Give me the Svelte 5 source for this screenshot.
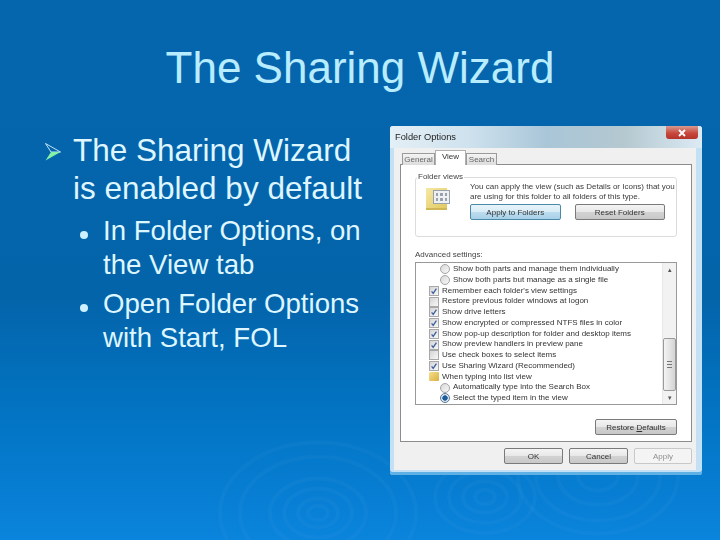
<script>
  // Filas de la lista "Advanced settings"
  const rows = [
    { kind: 'radio', label: 'Show both parts and manage them individually' },
    { kind: 'radio', label: 'Show both parts but manage as a single file' },
    { kind: 'check', on: true, label: "Remember each folder's view settings" },
    { kind: 'check', label: 'Restore previous folder windows at logon' },
    { kind: 'check', on: true, label: 'Show drive letters' },
    { kind: 'check', on: true, label: 'Show encrypted or compressed NTFS files in color' },
    { kind: 'check', on: true, label: 'Show pop-up description for folder and desktop items' },
    { kind: 'check', on: true, label: 'Show preview handlers in preview pane' },
    { kind: 'check', label: 'Use check boxes to select items' },
    { kind: 'check', on: true, label: 'Use Sharing Wizard (Recommended)' },
    { kind: 'folder', label: 'When typing into list view' },
    { kind: 'radio', label: 'Automatically type into the Search Box' },
    { kind: 'radio', on: true, label: 'Select the typed item in the view' }
  ];

  const rings = [
    { cx: 318, cy: 513, radii: [10, 20, 34, 48, 78, 98] },
    { cx: 485, cy: 497, radii: [10, 22, 36, 50] },
    { cx: 598, cy: 476, radii: [20, 40, 62, 80] }
  ];
</script>

<div class="slide">
  <svg class="ripples" viewBox="0 0 720 540" aria-hidden="true">
    {#each rings as g}
      {#each g.radii as r}
        <ellipse cx={g.cx} cy={g.cy} rx={r} ry={r * 0.72} fill="none" stroke="#fff" stroke-opacity="0.028" stroke-width="4"/>
      {/each}
    {/each}
  </svg>

  <h1>The Sharing Wizard</h1>

  <div class="content">
    <div class="text">
      <div class="main">
        <svg class="arrow" viewBox="0 0 16 18" aria-hidden="true">
          <polygon points="0.5,0.5 15.5,9 6,9" fill="none" stroke="#d4f4ff" stroke-width="0.9"/>
          <polygon points="6,9 15.5,9 0.5,17.5" fill="#86f2a8"/>
        </svg>
        <p>The Sharing Wizard<br>is enabled by default</p>
      </div>
      <ul>
        <li>In Folder Options, on<br>the View tab</li>
        <li>Open Folder Options<br>with Start, FOL</li>
      </ul>
    </div>

    <div class="dialog">
      <div class="titlebar">
        <span>Folder Options</span>
        <div class="close">
          <svg viewBox="0 0 10 8" aria-hidden="true"><path d="M2 1l6 6M8 1L2 7" stroke="#fff" stroke-width="1.8" fill="none"/></svg>
        </div>
      </div>
      <div class="client">
        <div class="tabs">
          <span class="tab">General</span>
          <span class="tab active">View</span>
          <span class="tab">Search</span>
        </div>
        <div class="panel">
          <fieldset class="views">
            <legend>Folder views</legend>
            <div class="views-icon">
              <div class="folder-sheet"></div>
              <div class="folder-win">
                {#each Array(6) as _}<i></i>{/each}
              </div>
            </div>
            <div class="views-body">
              <p>You can apply the view (such as Details or Icons) that you<br>are using for this folder to all folders of this type.</p>
              <div class="views-btns">
                <button class="btn focus">Apply to Folders</button>
                <button class="btn">Reset Folders</button>
              </div>
            </div>
          </fieldset>

          <div class="adv-label">Advanced settings:</div>
          <div class="listbox">
            <div class="items">
              {#each rows as row}
                <div class="row {row.kind}">
                  {#if row.kind === 'radio'}
                    <span class="radio-mark" class:on={row.on}></span>
                  {:else if row.kind === 'check'}
                    <span class="check-mark">
                      {#if row.on}
                        <svg viewBox="0 0 10 10" aria-hidden="true"><path d="M2 5.5l2 2.5 4-6" stroke="#3d5f9c" stroke-width="1.6" fill="none"/></svg>
                      {/if}
                    </span>
                  {:else}
                    <span class="folder-mark"></span>
                  {/if}
                  <span>{row.label}</span>
                </div>
              {/each}
            </div>
            <div class="scrollbar">
              <span class="sb-arrow">▴</span>
              <div class="sb-track"><div class="sb-thumb"><b></b></div></div>
              <span class="sb-arrow">▾</span>
            </div>
          </div>
          <div class="restore"><button class="btn wide">Restore <u>D</u>efaults</button></div>
        </div>
        <div class="footer">
          <button class="btn">OK</button>
          <button class="btn">Cancel</button>
          <button class="btn off">Apply</button>
        </div>
      </div>
    </div>
  </div>
</div>

<style>
  :global(body) { margin: 0; }

  .slide {
    position: relative;
    width: 720px;
    height: 540px;
    overflow: hidden;
    background: linear-gradient(180deg, #0566ae 0%, #0464aa 55%, #0272c0 74%, #0a84dc 100%);
    font-family: "Liberation Sans", Arial, sans-serif;
  }
  .ripples { position: absolute; inset: 0; width: 720px; height: 540px; }

  h1 {
    position: relative;
    margin: 0;
    height: 126px;
    padding-top: 42px;
    box-sizing: border-box;
    text-align: center;
    font-size: 44px;
    line-height: 52px;
    font-weight: 400;
    color: #b8ecff;
  }

  .content { position: relative; display: flex; }
  .text { width: 390px; color: #def6ff; }

  .main { display: flex; padding: 5px 0 0 45px; }
  .arrow { width: 16px; height: 18px; margin: 12px 12px 0 0; flex: none; }
  .main p { margin: 0; font-size: 31.5px; line-height: 38px; }

  ul { list-style: none; margin: 7px 0 0; padding: 0 0 0 80px; }
  li { position: relative; padding-left: 23px; font-size: 27.6px; line-height: 34px; margin-bottom: 5px; }
  li::before {
    content: '';
    position: absolute;
    left: 0;
    top: 17px;
    width: 8px;
    height: 8px;
    border-radius: 50%;
    background: #cdf0ff;
  }

  .dialog {
    width: 312px;
    height: 349px;
    box-sizing: border-box;
    border-radius: 3px;
    background: #c4e0f4;
    padding: 0 6px 5px 6px;
    display: flex;
    flex-direction: column;
    font-size: 8px;
    color: #333;
    filter: blur(0.4px);
    box-shadow: inset 0 -3px 0 #5fb0e4;
  }
  .titlebar {
    height: 22px;
    margin: 0 -6px;
    padding: 0 4px 0 5px;
    display: flex;
    justify-content: space-between;
    border-radius: 3px 3px 0 0;
    background: linear-gradient(90deg, #e4eff6 0%, #cfe2ee 25%, #a9c6d8 50%, #b4c8d0 75%, #dceaf4 100%);
    font-size: 9.3px;
  }
  .titlebar span { padding-top: 6px; color: #222; }
  .close {
    width: 32px;
    height: 13px;
    border-radius: 0 0 3px 3px;
    background: linear-gradient(180deg, #d99a90 0%, #c8483c 55%, #b4342c 100%);
    display: flex;
    align-items: center;
    justify-content: center;
  }
  .close svg { width: 10px; height: 8px; }

  .client {
    flex: 1;
    display: flex;
    flex-direction: column;
    background: #f0f0f0;
    margin: 0 0 0 -2px;
    padding: 4px 4px 0 6px;
  }
  .tabs { display: flex; height: 13px; align-items: flex-end; padding-left: 2px; margin-bottom: -1px; position: relative; }
  .tab {
    height: 12px;
    line-height: 12px;
    width: 33px;
    text-align: center;
    border: 1px solid #9a9a9a;
    border-bottom: none;
    box-sizing: border-box;
    background: linear-gradient(#f4f4f4, #dcdcdc);
    color: #666;
  }
  .tab.active { height: 15px; width: 31px; background: #fff; color: #333; line-height: 11px; border-color: #b0b0b0; }
  .tab:last-child { width: 31px; }

  .panel {
    height: 278px;
    box-sizing: border-box;
    background: #fff;
    border: 1px solid #8c8c8c;
    padding: 7px 14px 0 14px;
    display: flex;
    flex-direction: column;
  }
  .views {
    margin: 0;
    padding: 0 11px 0 10px;
    height: 65px;
    box-sizing: border-box;
    border: 1px solid #dcdcdc;
    border-radius: 3px;
    display: flex;
    gap: 20px;
    min-width: 0;
  }
  .views legend { padding: 0 1px; line-height: 10px; margin-left: -9px; color: #444; }

  .views-icon { position: relative; width: 24px; height: 22px; margin-top: 6px; flex: none; }
  .folder-sheet {
    width: 21px;
    height: 20px;
    background: linear-gradient(135deg, #f5e9a8, #e2c85c);
    border-bottom: 2px solid #cfb755;
  }
  .folder-win {
    position: absolute;
    left: 7px;
    top: 2px;
    width: 17px;
    height: 14px;
    box-sizing: border-box;
    padding: 2px;
    background: #eef0f2;
    border: 1px solid #98a2ac;
    display: grid;
    grid-template-columns: repeat(3, 1fr);
    gap: 2px;
  }
  .folder-win i { background: #98a2ae; }

  .views-body { flex: 1; min-width: 0; }
  .views-body p { margin: 0; line-height: 9.5px; white-space: nowrap; color: #3a3a3a; }
  .views-btns { display: flex; gap: 14px; margin-top: 3px; }
  .views-btns .btn { width: 91px; }
  .btn {
    height: 16px;
    padding: 0;
    font: inherit;
    color: #333;
    border: 1px solid #7a7a7a;
    border-radius: 2px;
    background: linear-gradient(180deg, #f4f4f4 0%, #e8e8e8 48%, #d2d2d2 52%, #c8c8c8 100%);
  }
  .btn.focus {
    border-color: #4a8aa8;
    background: linear-gradient(180deg, #e8f4fa 0%, #d8ecf6 48%, #bcdcee 52%, #a8d0e8 100%);
  }
  .btn.off { border-color: #c8c8c8; background: #f4f4f4; color: #909090; }

  .adv-label { margin-top: 13px; line-height: 10px; color: #444; }
  .listbox {
    margin-top: 2px;
    height: 143px;
    box-sizing: border-box;
    border: 1px solid #999;
    display: flex;
    justify-content: space-between;
  }
  .items { padding: 1px 0 0 13px; white-space: nowrap; }
  .row { height: 10.75px; line-height: 10.75px; display: flex; align-items: center; gap: 3px; color: #333; }
  .row.radio { padding-left: 11px; }

  .check-mark {
    width: 10px;
    height: 10px;
    box-sizing: border-box;
    border: 1px solid #a8a8a8;
    background: linear-gradient(135deg, #d4d4d4, #f8f8f8);
    display: block;
  }
  .check-mark svg { display: block; width: 8px; height: 8px; }
  .radio-mark {
    width: 10px;
    height: 10px;
    box-sizing: border-box;
    border: 1px solid #a4a4a4;
    border-radius: 50%;
    background: linear-gradient(135deg, #d8d8d8, #f8f8f8);
  }
  .radio-mark.on {
    border-color: #5a7a9c;
    background: radial-gradient(circle, #1c5c9c 0 2.4px, #e0e8f0 3px);
  }
  .folder-mark {
    width: 10px;
    height: 9px;
    border-radius: 1px;
    background: linear-gradient(135deg, #f6e08c, #d8b040);
  }

  .scrollbar {
    width: 13px;
    flex: none;
    background: #f2f2f2;
    border-left: 1px solid #e8e8e8;
    display: flex;
    flex-direction: column;
    align-items: center;
  }
  .sb-arrow { height: 13px; line-height: 13px; font-size: 7px; color: #555; }
  .sb-track { flex: 1; width: 100%; position: relative; }
  .sb-thumb {
    position: absolute;
    left: 0;
    right: 0;
    bottom: 0;
    height: 53px;
    box-sizing: border-box;
    border: 1px solid #9a9a9a;
    border-radius: 2px;
    background: linear-gradient(90deg, #f4f4f4, #d4d4d4);
    display: flex;
    align-items: center;
    justify-content: center;
  }
  .sb-thumb b {
    width: 5px;
    height: 5px;
    border-top: 1px solid #777;
    border-bottom: 1px solid #777;
    background: linear-gradient(#777, #777) center / 100% 1px no-repeat;
  }

  .restore { display: flex; justify-content: flex-end; margin-top: 14px; }
  .btn.wide { width: 82px; }

  .footer { display: flex; justify-content: flex-end; gap: 6px; padding-top: 6px; }
  .footer .btn { width: 59px; }
  .footer .btn.off { width: 58px; }
</style>
